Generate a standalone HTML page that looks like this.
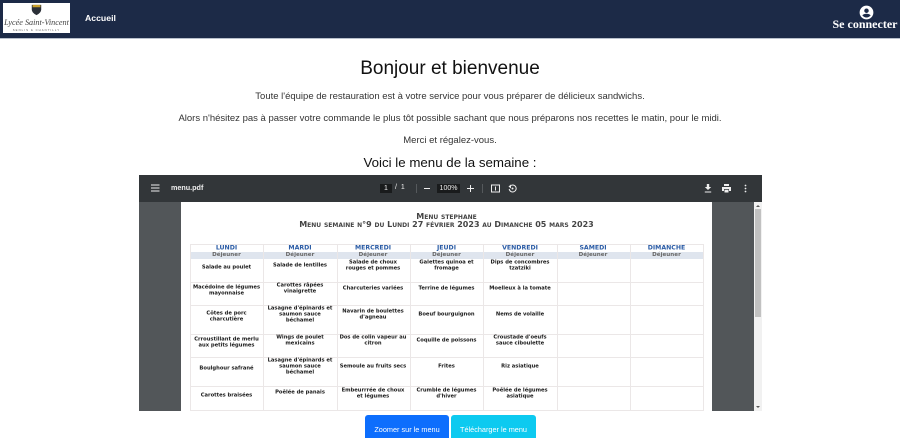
<!DOCTYPE html>
<html lang="fr"><head><meta charset="utf-8"><title>Menu</title>
<style>
html,body{margin:0;padding:0;background:#fff;overflow:hidden;}
body{width:900px;height:438px;position:relative;font-family:"Liberation Sans",sans-serif;color:#212529;filter:blur(.25px);}
.a{position:absolute;}
.c{position:absolute;left:0;width:900px;text-align:center;white-space:nowrap;}
#nav{left:0;top:0;width:900px;height:37.5px;background:#1c2a47;border-bottom:1px solid #b8c0cc;box-sizing:content-box;}
.t{position:absolute;font-family:"DejaVu Sans",sans-serif;font-size:5.2px;font-weight:bold;line-height:6.1px;text-align:center;color:#1a1a1a;transform:translate(-50%,calc(-50% + .7px));white-space:nowrap;}
.h{position:absolute;font-family:"DejaVu Sans",sans-serif;font-size:6.2px;font-weight:bold;text-align:center;color:#2a5ba5;transform:translate(-50%,-50%);white-space:nowrap;}
.d{position:absolute;font-family:"DejaVu Sans",sans-serif;font-size:5.6px;font-weight:bold;text-align:center;color:#666;transform:translate(-50%,-50%);white-space:nowrap;}
.v{position:absolute;width:1px;top:244px;height:167px;background:#ebe7e7;}
.r{position:absolute;left:190px;width:513px;height:1px;background:#ebe7e7;}
.btn{position:absolute;top:415px;height:30px;border-radius:3px;color:#fff;font-size:7.3px;text-align:center;line-height:30px;}
</style></head><body>
<div id="nav" class="a"></div>
<div class="a" style="left:3px;top:3px;width:67px;height:30px;background:#fff;border:0;overflow:hidden;">
<svg class="a" style="left:28px;top:1px" width="11" height="12" viewBox="0 0 14 13"><path d="M1 0H13V6Q13 10 7 13Q1 10 1 6Z" fill="#2b3038"/><path d="M2 0H12V3H2Z" fill="#c9a02e"/></svg>
<div class="a" style="left:0;top:15px;width:67px;text-align:center;font-family:'Liberation Serif',serif;font-style:italic;font-size:8.200px;line-height:10px;color:#444;white-space:nowrap;">Lycée Saint-Vincent</div>
<div class="a" style="left:0;top:25.500px;width:67px;text-align:center;font-size:2.800px;line-height:3px;letter-spacing:1.050px;color:#555;white-space:nowrap;">SENLIS &amp; CHANTILLY</div>
</div>
<div class="a" style="left:85px;top:12px;font-size:8.700px;line-height:12px;font-weight:bold;color:#fff;">Accueil</div>
<svg class="a" style="left:858.500px;top:5px" width="15" height="15" viewBox="0 0 24 24"><path fill="#fff" d="M12 1a11 11 0 1 0 0 22 11 11 0 0 0 0-22zm0 4.500a3.600 3.600 0 1 1 0 7.200 3.600 3.600 0 0 1 0-7.200zM12 20c-2.800 0-5.300-1.400-6.700-3.600 1.500-1.600 4.300-2.400 6.700-2.400s5.200.8 6.700 2.400C17.300 18.600 14.800 20 12 20z"/></svg>
<div class="a" style="left:832px;top:17px;width:66px;text-align:center;font-family:'Liberation Serif',serif;font-weight:bold;font-size:12px;line-height:14px;color:#fff;white-space:nowrap;">Se connecter</div>

<div class="c" style="top:57px;font-size:19px;line-height:24px;color:#111;">Bonjour et bienvenue</div>
<div class="c" style="top:90px;font-size:9.500px;line-height:13px;color:#333;">Toute l'équipe de restauration est à votre service pour vous préparer de délicieux sandwichs.</div>
<div class="c" style="top:112px;font-size:9.500px;line-height:13px;color:#333;">Alors n'hésitez pas à passer votre commande le plus tôt possible sachant que nous préparons nos recettes le matin, pour le midi.</div>
<div class="c" style="top:134px;font-size:9.500px;line-height:13px;color:#333;">Merci et régalez-vous.</div>
<div class="c" style="top:154px;font-size:13.300px;line-height:18px;color:#111;">Voici le menu de la semaine :</div>

<!-- viewer -->
<div class="a" style="left:139px;top:175px;width:623px;height:236px;background:#525659;"></div>
<div class="a" style="left:139px;top:175px;width:623px;height:27px;background:#323639;"></div>
<svg class="a" style="left:151px;top:184px" width="9" height="8" viewBox="0 0 9 8"><path d="M0 1H8.500M0 4H8.500M0 7H8.500" stroke="#eee" stroke-width="1"/></svg>
<div class="a" style="left:171px;top:183px;font-size:7.200px;line-height:10px;color:#eee;font-weight:bold;">menu.pdf</div>
<div class="a" style="left:380px;top:184px;width:12px;height:9px;background:#191b1c;color:#eee;font-size:7px;line-height:9px;text-align:center;">1</div>
<div class="a" style="left:395px;top:183px;font-size:7px;line-height:10px;color:#eee;">/&nbsp;&nbsp;1</div>
<div class="a" style="left:416px;top:184px;width:1px;height:9px;background:#55595c;"></div>
<div class="a" style="left:424px;top:188px;width:6px;height:1px;background:#eee;"></div>
<div class="a" style="left:437px;top:184px;width:23px;height:9px;background:#191b1c;color:#eee;font-size:7px;line-height:9px;text-align:center;">100%</div>
<svg class="a" style="left:467px;top:185px" width="7" height="7" viewBox="0 0 7 7"><path d="M0 3.500H7M3.500 0V7" stroke="#eee" stroke-width="1"/></svg>
<div class="a" style="left:482px;top:184px;width:1px;height:9px;background:#55595c;"></div>
<svg class="a" style="left:491px;top:184px" width="9" height="9" viewBox="0 0 9 9"><rect x=".5" y="1" width="8" height="7" fill="none" stroke="#eee"/><path d="M4.500 2.500V6.500" stroke="#eee"/></svg>
<svg class="a" style="left:508px;top:184px" width="9" height="9" viewBox="0 0 9 9"><path d="M2 2.200A3.500 3.500 0 1 1 1.200 5" fill="none" stroke="#eee"/><path d="M.5 2.500L3 .5V4.500Z" fill="#eee"/><circle cx="4.500" cy="4.500" r="1" fill="#eee"/></svg>
<svg class="a" style="left:704px;top:184px" width="8" height="9" viewBox="0 0 8 9"><path d="M2.800 0H5.200V3H7.200L4 6 .8 3H2.800ZM.8 7.500H7.200V8.500H.8Z" fill="#eee"/></svg>
<svg class="a" style="left:722px;top:184px" width="9" height="9" viewBox="0 0 9 9"><path d="M2 0H7V2H2ZM0 3H9V7H7V5H2V7H0ZM2.500 5.700H6.500V8.500H2.500Z" fill="#eee"/></svg>
<svg class="a" style="left:744px;top:184px" width="3" height="9" viewBox="0 0 3 9"><circle cx="1.500" cy="1.500" r=".9" fill="#eee"/><circle cx="1.500" cy="4.500" r=".9" fill="#eee"/><circle cx="1.500" cy="7.500" r=".9" fill="#eee"/></svg>
<!-- scrollbar -->
<div class="a" style="left:754px;top:202px;width:8px;height:209px;background:#f1f1f1;"></div>
<div class="a" style="left:755px;top:209px;width:6px;height:108px;background:#c1c1c1;"></div>
<div class="a" style="left:756px;top:205px;width:0;height:0;border:2px solid transparent;border-top:0;border-bottom:2px solid #555;"></div>
<div class="a" style="left:756px;top:406px;width:0;height:0;border:2px solid transparent;border-bottom:0;border-top:2px solid #555;"></div>
<!-- page -->
<div class="a" style="left:181px;top:202px;width:531px;height:209px;background:#fff;"></div>
<div class="c" style="left:-3.500px;top:212px;font-family:'DejaVu Sans',sans-serif;font-size:8px;line-height:10px;font-variant:small-caps;font-weight:bold;color:#444;">Menu stephane</div>
<div class="c" style="left:-3.500px;top:219px;font-family:'DejaVu Sans',sans-serif;font-size:8px;line-height:11px;font-variant:small-caps;font-weight:bold;color:#444;">Menu semaine n°9 du Lundi 27 février 2023 au Dimanche 05 mars 2023</div>
<!-- table -->
<div class="a" style="left:190px;top:251.500px;width:513px;height:7px;background:#dfe5ee;"></div>
<div class="v" style="left:189.500px"></div><div class="v" style="left:263px"></div><div class="v" style="left:336.500px"></div><div class="v" style="left:410px"></div><div class="v" style="left:483px"></div><div class="v" style="left:556.500px"></div><div class="v" style="left:629.500px"></div><div class="v" style="left:703px"></div>
<div class="r" style="top:244px"></div><div class="r" style="top:282px"></div><div class="r" style="top:305px"></div><div class="r" style="top:334px"></div><div class="r" style="top:357px"></div><div class="r" style="top:386px"></div><div class="r" style="top:410px"></div>

<div class="h" style="left:226.500px;top:248px">LUNDI</div><div class="h" style="left:300px;top:248px">MARDI</div><div class="h" style="left:373px;top:248px">MERCREDI</div><div class="h" style="left:446.500px;top:248px">JEUDI</div><div class="h" style="left:520px;top:248px">VENDREDI</div><div class="h" style="left:593px;top:248px">SAMEDI</div><div class="h" style="left:666.500px;top:248px">DIMANCHE</div>
<div class="d" style="left:226.500px;top:255px">Déjeuner</div><div class="d" style="left:300px;top:255px">Déjeuner</div><div class="d" style="left:373px;top:255px">Déjeuner</div><div class="d" style="left:446.500px;top:255px">Déjeuner</div><div class="d" style="left:520px;top:255px">Déjeuner</div><div class="d" style="left:593px;top:255px">Déjeuner</div><div class="d" style="left:666.500px;top:255px">Déjeuner</div>

<div class="t" style="left:226.500px;top:267px">Salade au poulet</div>
<div class="t" style="left:300px;top:265px">Salade de lentilles</div>
<div class="t" style="left:373px;top:265px">Salade de choux<br>rouges et pommes</div>
<div class="t" style="left:446.500px;top:265px">Galettes quinoa et<br>fromage</div>
<div class="t" style="left:520px;top:265px">Dips de concombres<br>tzatziki</div>

<div class="t" style="left:226.500px;top:290px">Macédoine de légumes<br>mayonnaise</div>
<div class="t" style="left:300px;top:288px">Carottes râpées<br>vinaigrette</div>
<div class="t" style="left:373px;top:288px">Charcuteries variées</div>
<div class="t" style="left:446.500px;top:288px">Terrine de légumes</div>
<div class="t" style="left:520px;top:288px">Moelleux à la tomate</div>

<div class="t" style="left:226.500px;top:316px">Côtes de porc<br>charcutière</div>
<div class="t" style="left:300px;top:314px">Lasagne d'épinards et<br>saumon sauce<br>béchamel</div>
<div class="t" style="left:373px;top:314px">Navarin de boulettes<br>d'agneau</div>
<div class="t" style="left:446.500px;top:314px">Boeuf bourguignon</div>
<div class="t" style="left:520px;top:314px">Nems de volaille</div>

<div class="t" style="left:226.500px;top:342px">Crroustillant de merlu<br>aux petits légumes</div>
<div class="t" style="left:300px;top:340px">Wings de poulet<br>mexicains</div>
<div class="t" style="left:373px;top:340px">Dos de colin vapeur au<br>citron</div>
<div class="t" style="left:446.500px;top:340px">Coquille de poissons</div>
<div class="t" style="left:520px;top:340px">Croustade d'oeufs<br>sauce ciboulette</div>

<div class="t" style="left:226.500px;top:368px">Boulghour safrané</div>
<div class="t" style="left:300px;top:366px">Lasagne d'épinards et<br>saumon sauce<br>béchamel</div>
<div class="t" style="left:373px;top:366px">Semoule au fruits secs</div>
<div class="t" style="left:446.500px;top:366px">Frites</div>
<div class="t" style="left:520px;top:366px">Riz asiatique</div>

<div class="t" style="left:226.500px;top:394.500px">Carottes braisées</div>
<div class="t" style="left:300px;top:392px">Poêlée de panais</div>
<div class="t" style="left:373px;top:392.500px">Embeurrrée de choux<br>et légumes</div>
<div class="t" style="left:446.500px;top:392.500px">Crumble de légumes<br>d'hiver</div>
<div class="t" style="left:520px;top:392.500px">Poêlée de légumes<br>asiatique</div>

<div class="btn" style="left:365px;width:84px;background:#0d6efd;">Zoomer sur le menu</div>
<div class="btn" style="left:451px;width:85px;background:#0dcaf0;">Télécharger le menu</div>
</body></html>
